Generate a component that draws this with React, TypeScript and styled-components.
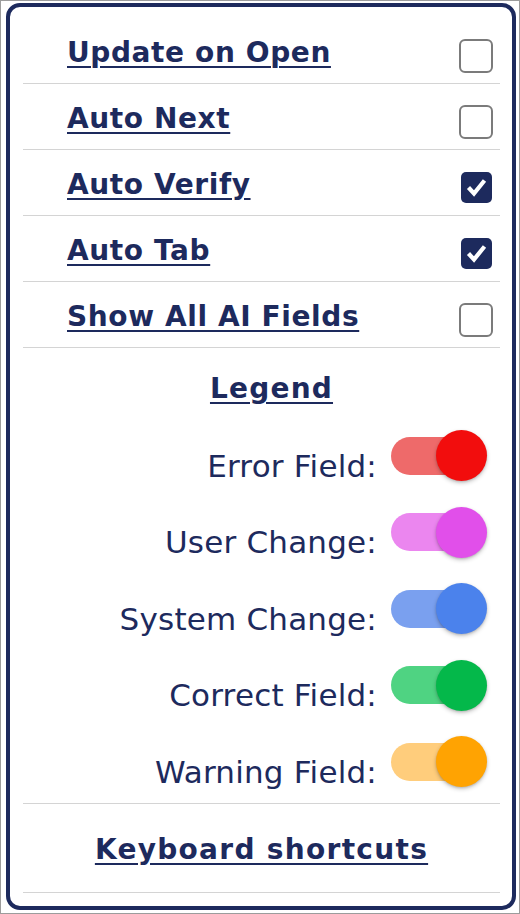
import React from "react";
import styled, { createGlobalStyle } from "styled-components";

const GlobalStyle = createGlobalStyle`
  html, body { margin: 0; padding: 0; background: #ffffff; }
  * { box-sizing: border-box; }
`;

const NAVY = "#1d2a5d";

const Page = styled.div`
  width: 520px;
  height: 914px;
  border: 1px solid #9c9c9c;
  padding: 2px 3px 3px 5px;
  background: #ffffff;
  display: flex;
`;

const Panel = styled.div`
  flex: 1;
  display: flex;
  flex-direction: column;
  border: 4px solid ${NAVY};
  border-radius: 14px;
  padding: 11px 12px 13px 13px;
  background: #ffffff;
  color: ${NAVY};
`;

const SettingRow = styled.div`
  height: 66px;
  display: flex;
  align-items: center;
  justify-content: space-between;
  padding: 4px 7px 0 44px;
  border-bottom: 1px solid #d4d4d4;
`;

const LinkText = styled.a<{ $spacing?: number }>`
  font-family: "DejaVu Sans", "Liberation Sans", sans-serif;
  font-weight: 700;
  font-size: 28px;
  line-height: 36px;
  letter-spacing: ${(p) => p.$spacing ?? 0.6}px;
  color: ${NAVY};
  text-decoration: underline;
  text-decoration-thickness: 2px;
  text-underline-offset: 4px;
  cursor: pointer;
  white-space: nowrap;
`;

const CheckSlot = styled.div`
  width: 34px;
  height: 34px;
  margin-top: 6px;
  display: flex;
  align-items: center;
  justify-content: center;
`;

const CheckBox = styled.div<{ $checked: boolean }>`
  width: ${(p) => (p.$checked ? "31px" : "34px")};
  height: ${(p) => (p.$checked ? "31px" : "34px")};
  border-radius: ${(p) => (p.$checked ? "5px" : "6px")};
  border: ${(p) => (p.$checked ? "none" : "2px solid #7b7b7b")};
  background: ${(p) => (p.$checked ? NAVY : "#ffffff")};
  display: flex;
  align-items: center;
  justify-content: center;
`;

const LegendSection = styled.div`
  display: flex;
  flex-direction: column;
  padding: 23px 0 3px;
  border-bottom: 1px solid #d4d4d4;
`;

const LegendTitle = styled.div`
  display: flex;
  justify-content: center;
  padding-left: 20px;
  margin-bottom: 10.5px;
`;

const LegendRow = styled.div`
  height: 76.5px;
  display: flex;
  align-items: center;
  justify-content: flex-end;
  gap: 14px;
  padding-right: 13.5px;
`;

const LegendLabel = styled.span`
  font-family: "DejaVu Sans", "Liberation Sans", sans-serif;
  font-size: 31px;
  line-height: 36px;
  letter-spacing: 0.2px;
  color: ${NAVY};
  margin-top: 20px;
  white-space: nowrap;
`;

const Toggle = styled.div`
  display: flex;
  align-items: center;
  height: 51px;
`;

const Track = styled.div<{ $color: string }>`
  width: 80px;
  height: 38px;
  border-radius: 19px;
  background: ${(p) => p.$color};
`;

const Knob = styled.div<{ $color: string }>`
  width: 51px;
  height: 51px;
  border-radius: 50%;
  margin-left: -35.5px;
  background: ${(p) => p.$color};
  box-shadow: 0 2px 4px rgba(0, 0, 0, 0.22), 0 1px 2px rgba(0, 0, 0, 0.12);
`;

const ShortcutRow = styled.div`
  height: 89px;
  display: flex;
  align-items: center;
  justify-content: center;
  padding-top: 3px;
  border-bottom: 1px solid #d4d4d4;
`;

const settings = [
  { label: "Update on Open", checked: false },
  { label: "Auto Next", checked: false },
  { label: "Auto Verify", checked: true },
  { label: "Auto Tab", checked: true },
  { label: "Show All AI Fields", checked: false },
];

const legend = [
  { label: "Error Field:", track: "#ee6a6a", knob: "#f20d0d" },
  { label: "User Change:", track: "#eb86ef", knob: "#e14fea" },
  { label: "System Change:", track: "#7aa0ef", knob: "#4b82ec" },
  { label: "Correct Field:", track: "#4fd382", knob: "#04b84a" },
  { label: "Warning Field:", track: "#ffcd7c", knob: "#ffa302" },
];

const CheckIcon = () => (
  <svg width="31" height="31" viewBox="0 0 31 31" aria-hidden="true">
    <polyline
      points="7.5,15.5 13,21.5 23.5,8.5"
      fill="none"
      stroke="#ffffff"
      strokeWidth="4.2"
      strokeLinejoin="miter"
      strokeLinecap="butt"
    />
  </svg>
);

export default function App() {
  return (
    <>
      <GlobalStyle />
      <Page>
        <Panel>
          {settings.map((s) => (
            <SettingRow key={s.label}>
              <LinkText>{s.label}</LinkText>
              <CheckSlot>
                <CheckBox $checked={s.checked}>{s.checked && <CheckIcon />}</CheckBox>
              </CheckSlot>
            </SettingRow>
          ))}
          <LegendSection>
            <LegendTitle>
              <LinkText $spacing={1.2}>Legend</LinkText>
            </LegendTitle>
            {legend.map((l) => (
              <LegendRow key={l.label}>
                <LegendLabel>{l.label}</LegendLabel>
                <Toggle>
                  <Track $color={l.track} />
                  <Knob $color={l.knob} />
                </Toggle>
              </LegendRow>
            ))}
          </LegendSection>
          <ShortcutRow>
            <LinkText $spacing={1.3}>Keyboard shortcuts</LinkText>
          </ShortcutRow>
        </Panel>
      </Page>
    </>
  );
}
